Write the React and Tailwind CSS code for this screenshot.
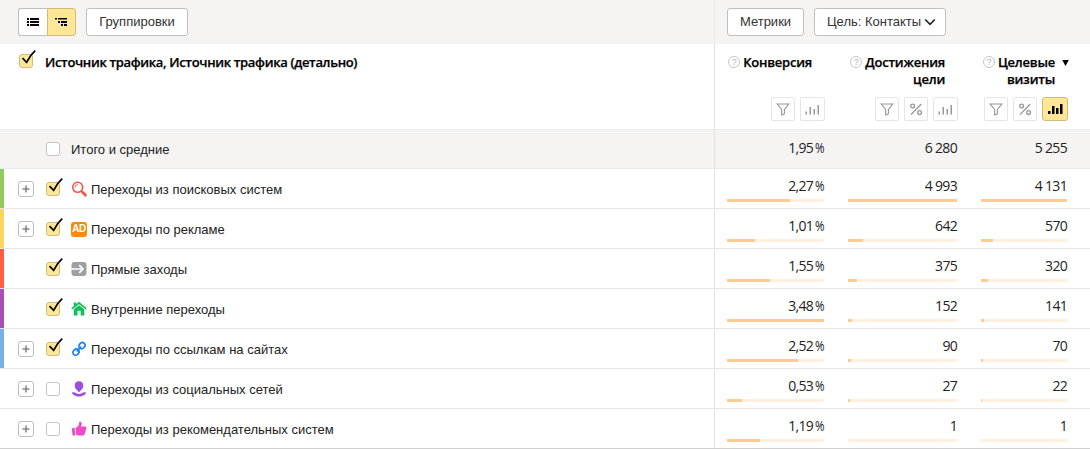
import React from 'react';

const HEAD = "font-['Open_Sans','Noto_Sans',sans-serif] text-[13px] font-semibold leading-[17px] text-black [-webkit-text-stroke:0.25px_#000]";

function Check({ on }) {
  if (!on) return <span className="block h-[14px] w-[14px] shrink-0 rounded-[3px] border border-[#c4c4c4] bg-white" />;
  return (
    <span className="relative block h-[14px] w-[14px] shrink-0 rounded-[3px] border border-[#cdbd7c] bg-[#ffe797]">
      <svg className="absolute -top-[5px] left-[1px]" width="17" height="17" viewBox="0 0 17 17" fill="none">
        <path d="M1.500 8.200 5.600 12.400C7.500 8.400 10.500 4 14.200 .7" stroke="#000" strokeWidth="1.700" />
      </svg>
    </span>
  );
}

function Plus() {
  return (
    <span className="flex h-4 w-4 items-center justify-center rounded-[3px] border border-[#bdbdbd] bg-white">
      <svg width="8" height="8" viewBox="0 0 8 8"><path d="M4 0.500V7.500M0.500 4H7.500" stroke="#888" strokeWidth="1.600" /></svg>
    </span>
  );
}

function SearchIcon() {
  return (
    <svg width="16" height="16" viewBox="0 0 16 16" fill="none" stroke="#f5554a">
      <circle cx="6.700" cy="6.300" r="5" strokeWidth="1.600" />
      <path d="M4 6.400A2.900 2.900 0 0 1 6.700 3.600" strokeWidth="1" />
      <path d="m10.300 10 1.200 1.200" strokeWidth="1.500" />
      <path d="m11.600 11.300 2.900 2.900" strokeWidth="2.700" strokeLinecap="round" />
    </svg>
  );
}

function AdIcon() {
  return (
    <span className="flex h-[15px] w-4 items-center justify-center rounded-[3px] bg-[#fb8a09] font-['Liberation_Sans',sans-serif] text-[10px] font-bold leading-none tracking-[-0.500px] text-white">AD</span>
  );
}

function DirectIcon() {
  return (
    <svg width="16" height="16" viewBox="0 0 16 16" fill="none">
      <rect x="0.500" y="1" width="15" height="14" rx="3" fill="#9ca0a3" />
      <path d="M0 8H12M8.200 4.200 12 8l-3.800 3.800" stroke="#fff" strokeWidth="1.700" />
    </svg>
  );
}

function HomeIcon() {
  return (
    <svg width="16" height="16" viewBox="0 0 16 16" fill="#14bd5b">
      <path d="M8 0.700 15.700 7.200 14.800 8.400 8 3.300 1.200 8.400.3 7.200 2.700 5.200V1.500H5.200V3.100Z" />
      <path d="M2.700 8.200 8 4.200l5.300 4V14.500H9.700V9.700H6.500V14.500H2.700Z" />
    </svg>
  );
}

function LinkIcon() {
  return (
    <svg width="16" height="16" viewBox="0 0 16 16" fill="none" stroke="#1980ee" strokeWidth="1.700" strokeLinecap="round">
      <rect x="7.700" y="2" width="6.500" height="5.400" rx="2.700" transform="rotate(-45 10.950 4.700)" />
      <rect x="1.700" y="8.500" width="6.500" height="5.400" rx="2.700" transform="rotate(-45 4.950 11.200)" />
      <path d="m6.200 9.800 3.500-3.700" />
    </svg>
  );
}

function SocialIcon() {
  return (
    <svg width="16" height="16" viewBox="0 0 16 16" fill="#9c4ee0">
      <path d="M8 .3C10.800.3 12.300 2 12.300 4.500c0 2.200-1 3.800-2.500 4.700L8.400 10.900h-.8L6.200 9.200C4.700 8.300 3.700 6.700 3.700 4.500 3.700 2 5.200.3 8 .3Z" />
      <path d="M.9 11.600c1.600-.5 3.300-.2 4.300.6 1.500 1.100 4.100 1.100 5.600 0 1-.8 2.700-1.100 4.300-.6-.6 2.200-3.400 4-7.100 4s-6.500-1.800-7.100-4Z" />
    </svg>
  );
}

function ThumbIcon() {
  return (
    <svg width="16" height="16" viewBox="0 0 16 16" fill="#ee4bc5">
      <path d="M.8 7.300 3.600 6.700 4.300 14.300 1.600 14.800Z" />
      <path d="M4.500 7.300 7.800 4.300 8.300.7C9.800.2 10.900 1.300 10.700 2.900L10.200 5.400H14c1.200 0 1.700.9 1.300 2.100l-1.600 5.600c-.3 1.100-1 1.500-2.100 1.500H7.400L5.100 13.800Z" />
    </svg>
  );
}

function Funnel() {
  return <svg width="14" height="14" viewBox="0 0 14 14" fill="none"><path d="M1.200 2H12.800L8.400 7.500V11.800L5.600 13V7.500Z" stroke="#969696" strokeWidth="1.100" /></svg>;
}
function Percent() {
  return (
    <svg width="14" height="14" viewBox="0 0 14 14" fill="none" stroke="#969696" strokeWidth="1.300">
      <circle cx="3.600" cy="4" r="1.900" /><circle cx="10.600" cy="10.600" r="1.900" /><path d="M12.300 2 2 12.600" />
    </svg>
  );
}
function Bars({ active }) {
  return (
    <svg width="15" height="14" viewBox="0 0 15 14" fill={active ? '#000' : '#989898'}>
      {active
        ? <path d="M0 9h2.500v3H0zM4 4h2.500v8H4zM8 6h2.500v6H8zM12 2h2.500v10H12z" />
        : <path d="M0.500 9.500h1.500v3H0.500zM4.500 5h1.500v7.500H4.500zM8.500 7h1.500v5.500H8.500zM12.500 3h1.500v9.500H12.500z" />}
    </svg>
  );
}

function Tool({ children, active, wide }) {
  return (
    <span className={active
      ? 'flex h-6 w-[26px] items-center justify-center rounded-[3px] border border-[#cdbd7c] bg-[#ffe797]'
      : `flex h-6 items-center justify-center rounded-[2px] border border-[#e5e5e5] bg-white ${wide ? 'w-[25px]' : 'w-6'}`}>{children}</span>
  );
}

function Help() {
  return <span className="mt-[2px] flex h-3 w-3 shrink-0 items-center justify-center rounded-full border border-[#c6c6c6] font-['Liberation_Sans',sans-serif] text-[9px] font-normal leading-none text-[#b0b0b0]">?</span>;
}

function Num({ children }) {
  const percent = children.endsWith('%');
  return (
    <div className={`whitespace-nowrap text-right font-['Open_Sans','Noto_Sans',sans-serif] text-[14px] leading-5 tracking-[-0.700px] text-[#222] ${percent ? '[word-spacing:-1px]' : ''}`}>
      {percent ? <>{children.slice(0, -1)}<span className="inline-block w-[9px] origin-left scale-x-[0.820] text-left">%</span></> : children}
    </div>
  );
}

function Metric({ value, share }) {
  return (
    <div className="flex flex-col pt-[7px]">
      <Num>{value}</Num>
      <div className="mt-[3px] h-[3px] bg-[#fff0e0]">
        <div className="h-full bg-[#fdcb96]" style={{ width: `${share}%` }} />
      </div>
    </div>
  );
}

const rows = [
  { label: 'Переходы из поисковых систем', color: 'bg-[#93cb62]', plus: true, on: true, icon: <SearchIcon />, m: [['2,27 %', 65], ['4 993', 100], ['4 131', 100]] },
  { label: 'Переходы по рекламе', color: 'bg-[#fed55f]', plus: true, on: true, icon: <AdIcon />, m: [['1,01 %', 29], ['642', 13.5], ['570', 14]] },
  { label: 'Прямые заходы', color: 'bg-[#ff5e42]', on: true, icon: <DirectIcon />, m: [['1,55 %', 44.5], ['375', 8], ['320', 8]] },
  { label: 'Внутренние переходы', color: 'bg-[#a951b3]', on: true, icon: <HomeIcon />, m: [['3,48 %', 100], ['152', 3.5], ['141', 3.4]] },
  { label: 'Переходы по ссылкам на сайтах', color: 'bg-[#78b0e2]', plus: true, on: true, icon: <LinkIcon />, m: [['2,52 %', 73], ['90', 2.5], ['70', 2]] },
  { label: 'Переходы из социальных сетей', color: 'bg-transparent', plus: true, icon: <SocialIcon />, m: [['0,53 %', 15.5], ['27', 1.5], ['22', 1]] },
  { label: 'Переходы из рекомендательных систем', color: 'bg-transparent', plus: true, icon: <ThumbIcon />, m: [['1,19 %', 34], ['1', 0], ['1', 0]] },
];

const LABEL = "whitespace-nowrap pt-[2px] font-['Liberation_Sans',sans-serif] text-[13px] leading-4 text-[#222]";
const BTN = "flex h-7 items-center rounded-[3px] border border-[#bfbfbf] bg-white font-['Liberation_Sans',sans-serif] text-[13px] text-[#333] whitespace-nowrap";

export default function App() {
  return (
    <div className="flex h-[449px] w-[1090px] flex-col overflow-hidden bg-white">
      <div className="flex h-11 shrink-0 bg-[#f5f4f3]">
        <div className="flex flex-1 items-start gap-[10px] pl-[18px] pt-2">
          <div className="flex h-7">
            <span className="flex w-[29px] items-center justify-center rounded-l-[3px] border border-r-0 border-[#bfbfbf] bg-white">
              <svg width="12" height="8" viewBox="0 0 12 8"><path d="M0 0h2v2H0zM3 0h9v2H3zM0 3h2v2H0zM3 3h9v2H3zM0 6h2v2H0zM3 6h9v2H3z" /></svg>
            </span>
            <span className="flex w-[29px] items-center justify-center rounded-r-[3px] border border-[#cdbd7c] bg-[#ffe797] pr-[2px]">
              <svg width="12" height="8" viewBox="0 0 12 8"><path d="M0 0h2v1.600H0zM3 0h9v1.600H3zM3 3h2v2H3zM6 3h6v2H6zM6 6h2v2H6zM9 6h3v2H9z" /></svg>
            </span>
          </div>
          <div className={`${BTN} w-[102px] justify-center`}>Группировки</div>
        </div>
        <div className="flex w-[376px] shrink-0 items-start gap-[10px] border-l border-[#e9e9e9] pl-3 pt-2">
          <div className={`${BTN} w-[77px] justify-center`}>Метрики</div>
          <div className={`${BTN} w-[132px] gap-[3px] pl-3`}>
            Цель: Контакты
            <svg width="12" height="8" viewBox="0 0 12 8" fill="none"><path d="m1.200 1.500 4.800 4.800 4.800-4.800" stroke="#222" strokeWidth="1.700" /></svg>
          </div>
        </div>
      </div>

      <div className="flex h-[85px] shrink-0">
        <div className="flex flex-1 items-start pl-[19px] pt-[10px]">
          <Check on />
          <span className={`${HEAD} ml-3 whitespace-nowrap tracking-[-0.340px]`}>Источник трафика, Источник трафика (детально)</span>
        </div>
        <div className="grid w-[376px] shrink-0 grid-cols-[97px_109px_86px] gap-x-6 border-l border-[#e3e3e3] pl-3">
          {[['Конверсия'], ['Достижения', 'цели'], ['Целевые', 'визиты']].map((lines, i) => (
            <div key={i} className="flex flex-col items-end justify-between pb-2 pt-[10px]">
              <div className="mr-3 flex gap-[3px]">
                <Help />
                <span className={`${HEAD} relative text-right tracking-[-0.220px]`}>
                  {lines.map((l) => <span key={l} className="block whitespace-nowrap">{l}</span>)}
                  {i === 2 && <svg className="absolute -right-[14px] top-[5px]" width="7" height="8" viewBox="0 0 7 8"><path d="M0.200 1H6.800L3.500 7Z" /></svg>}
                </span>
              </div>
              <div className="-mr-[1px] flex gap-[5px]">
                <Tool><Funnel /></Tool>
                {i > 0 && <Tool><Percent /></Tool>}
                <Tool active={i === 2} wide><Bars active={i === 2} /></Tool>
              </div>
            </div>
          ))}
        </div>
      </div>

      <div className="flex h-10 shrink-0 border-y border-[#e9e9e9] bg-[#f5f4f3]">
        <div className="flex flex-1 items-center pl-[46px]">
          <Check />
          <span className={`${LABEL} ml-[11px]`}>Итого и средние</span>
        </div>
        <div className="grid w-[376px] shrink-0 grid-cols-[97px_109px_86px] gap-x-6 border-l border-[#e3e3e3] pl-3 pt-2">
          <Num>1,95 %</Num><Num>6 280</Num><Num>5 255</Num>
        </div>
      </div>

      {rows.map((r, i) => (
        <div key={r.label} className={`flex h-10 shrink-0 border-b ${i === 6 ? 'border-[#d0d0d0]' : 'border-[#e6e6e6]'}`}>
          <span className={`w-1 ${r.color}`} />
          <div className="flex flex-1 items-center pl-[14px] pt-[1px]">
            <span className="w-7">{r.plus && <Plus />}</span>
            <Check on={r.on} />
            <span className="ml-[11px] flex w-5 items-center">{r.icon}</span>
            <span className={LABEL}>{r.label}</span>
          </div>
          <div className="grid w-[376px] shrink-0 grid-cols-[97px_109px_86px] gap-x-6 border-l border-[#e3e3e3] pl-3">
            {r.m.map(([v, s], j) => <Metric key={j} value={v} share={s} />)}
          </div>
        </div>
      ))}
    </div>
  );
}
